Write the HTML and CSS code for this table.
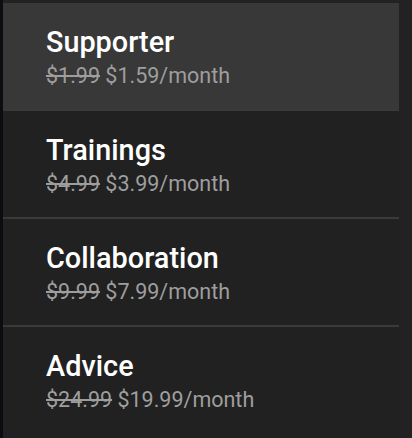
FILE: index.html
```html
<!DOCTYPE html>
<html>
<head>
<meta charset="utf-8">
<link rel="stylesheet" href="styles.css">
</head>
<body>
<div class="page">
  <div class="backdrop-left"></div>
  <div class="menu-wrap">
    <ul class="menu">
      <li class="item active">
        <div class="title">Supporter</div>
        <div class="price"><s>$1.99</s> $1.59/month</div>
      </li>
      <li class="item">
        <div class="title">Trainings</div>
        <div class="price"><s>$4.99</s> $3.99/month</div>
      </li>
      <li class="item">
        <div class="title">Collaboration</div>
        <div class="price"><s>$9.99</s> $7.99/month</div>
      </li>
      <li class="item last">
        <div class="title">Advice</div>
        <div class="price"><s>$24.99</s> $19.99/month</div>
      </li>
    </ul>
  </div>
</div>
</body>
</html>
```

FILE: styles.css
```css
html, body {
  margin: 0;
  padding: 0;
  height: 100%;
  overflow: hidden;
  background: #222222;
  font-family: Roboto, "Noto Sans", sans-serif;
}
.page {
  display: flex;
  height: 438px;
}
.backdrop-left {
  width: 3px;
  flex: none;
  background: #0e0c10;
}
.menu-wrap {
  padding-top: 3px;
  width: 396px;
  flex: none;
}
.menu {
  list-style: none;
  margin: 0;
  padding: 0;
  background: #212121;
  height: 435px;
}
.item {
  height: 108px;
  box-sizing: border-box;
  padding: 23px 0 0 43px;
  border-bottom: 2px solid #3a3a3a;
}
.item.last {
  border-bottom: none;
}
.item.active {
  background: #383838;
}
.title {
  color: #ffffff;
  font-family: "Roboto Medium", Roboto, "Noto Sans", sans-serif;
  font-size: 28.8px;
  font-weight: 500;
  line-height: 32px;
}
.price {
  color: #9e9e9e;
  font-size: 21.5px;
  line-height: 26px;
  margin-top: 5px;
}
.price s {
  text-decoration-thickness: 2px;
}
```
